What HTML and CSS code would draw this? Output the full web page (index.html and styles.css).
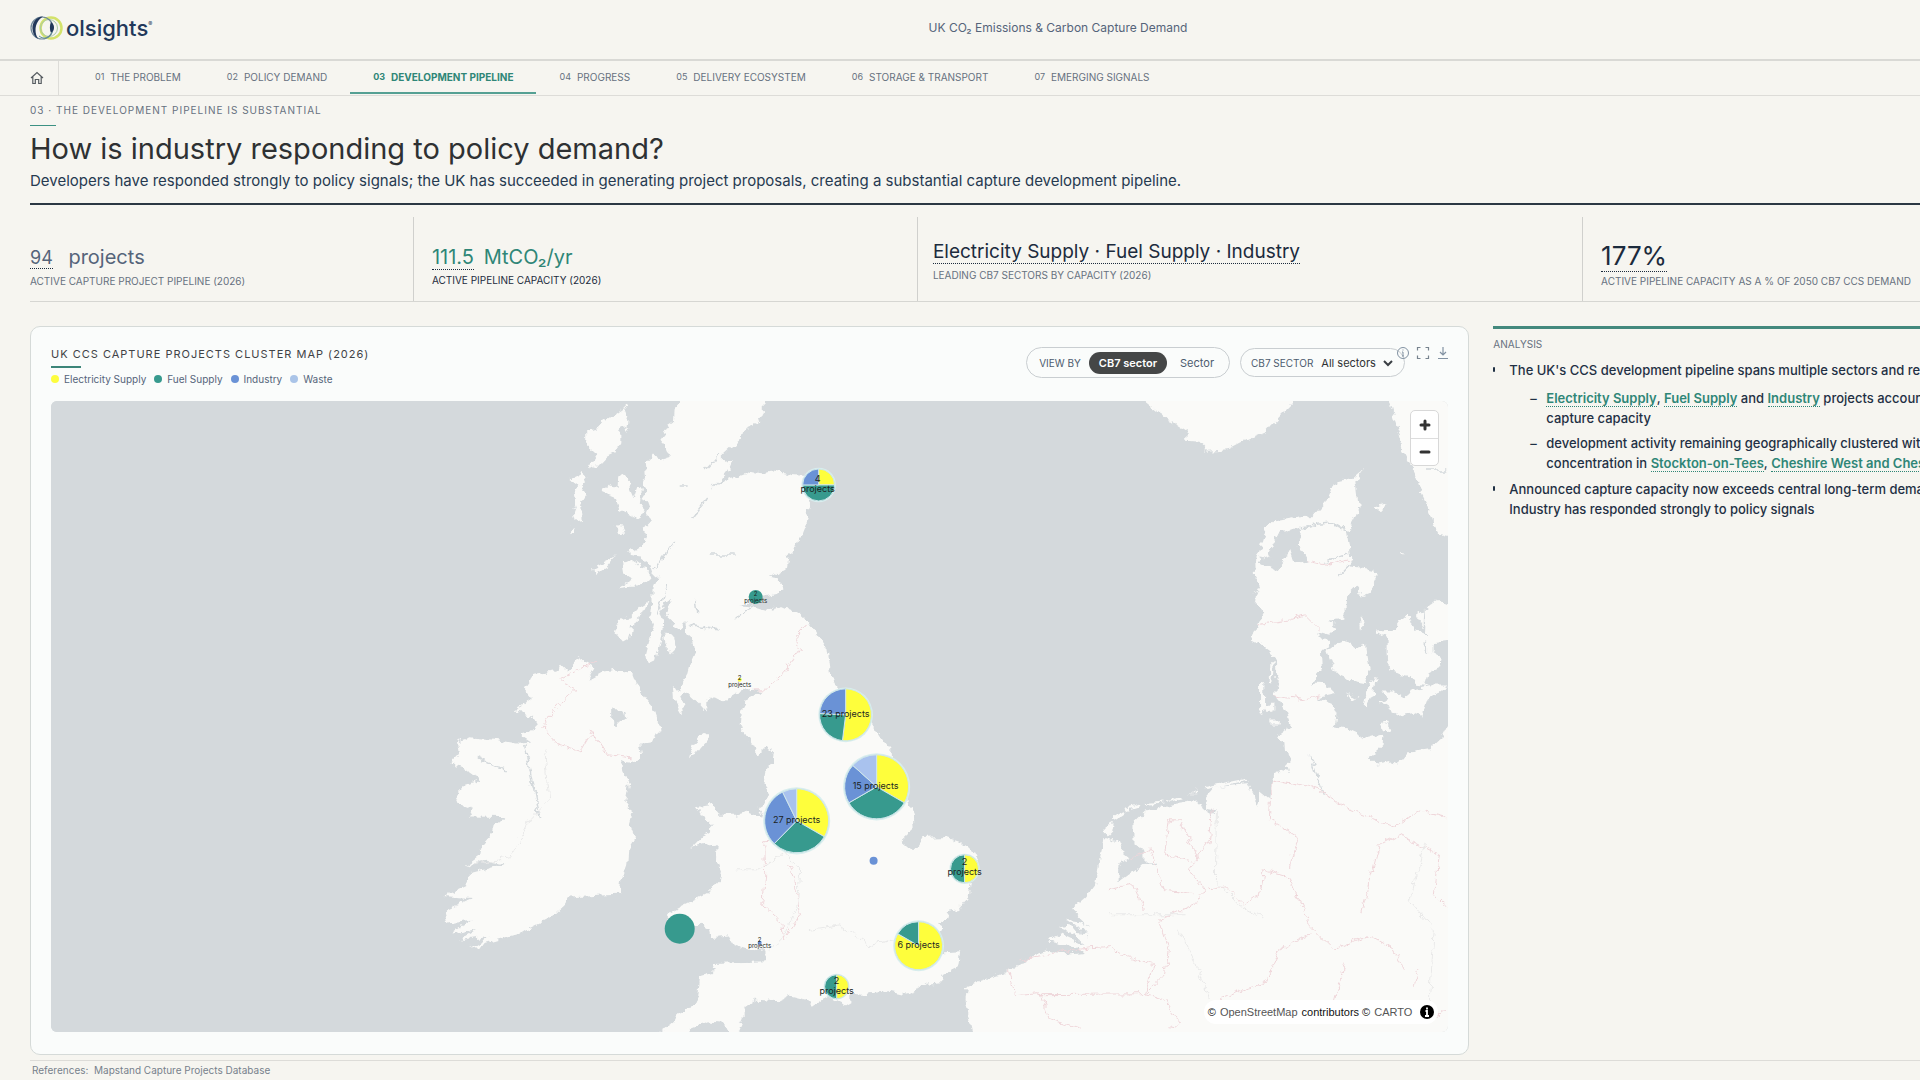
FILE: index.html
```
<!DOCTYPE html>
<html lang="en">
<head>
<meta charset="utf-8">
<title>UK CO₂ Emissions &amp; Carbon Capture Demand</title>
<link rel="stylesheet" href="styles.css">
</head>
<body>
<div class="page">
  <header class="topbar">
    <a class="logo" href="#" aria-label="Olsights">
      <svg width="34" height="28" viewBox="0 0 34 28" aria-hidden="true">
        <circle cx="21" cy="14" r="10.500" fill="none" stroke="#d3e26a" stroke-width="2.5"/>
        <circle cx="19" cy="14" r="8.5" fill="none" stroke="#a9c8a8" stroke-width="1"/>
        <circle cx="12" cy="14" r="11" fill="none" stroke="#6f8799" stroke-width="1.2"/>
        <path d="M13 2.500C1 3-1 19 8 25 3 16 6 7 13 2.500Z" fill="#22385a"/>
        <path d="M21 8c4 3 4 8 0 11-1.500-3-1.500-8 0-11Z" fill="#22385a"/>
        <path d="M9 22c5 4 11 2 13-4" fill="none" stroke="#5d8f91" stroke-width="1"/>
      </svg>
      <span>olsights<sup>®</sup></span>
    </a>
    <p class="topbar-title">UK CO₂ Emissions &amp; Carbon Capture Demand</p>
  </header>

  <nav class="tabs">
    <a class="home" href="#" aria-label="Home">
      <svg width="14" height="14" viewBox="0 0 14 14" fill="none" stroke="#555b60" stroke-width="1.2" aria-hidden="true"><path d="M1 7 7 1.5 13 7M2.800 5.800V12.500H5.300V8.500H8.700V12.500H11.200V5.800"/></svg>
    </a>
    <a class="tab" href="#"><span>01</span>THE PROBLEM</a>
    <a class="tab" href="#"><span>02</span>POLICY DEMAND</a>
    <a class="tab active" href="#"><span>03</span>DEVELOPMENT PIPELINE</a>
    <a class="tab" href="#"><span>04</span>PROGRESS</a>
    <a class="tab" href="#"><span>05</span>DELIVERY ECOSYSTEM</a>
    <a class="tab" href="#"><span>06</span>STORAGE &amp; TRANSPORT</a>
    <a class="tab" href="#"><span>07</span>EMERGING SIGNALS</a>
  </nav>

  <div class="content">
    <section class="intro">
      <p class="eyebrow">03 · THE DEVELOPMENT PIPELINE IS SUBSTANTIAL</p>
      <h1>How is industry responding to policy demand?</h1>
      <p class="lede">Developers have responded strongly to policy signals; the UK has succeeded in generating project proposals, creating a substantial capture development pipeline.</p>
    </section>

    <section class="kpis">
      <div class="kpi">
        <p class="value slate"><span class="count small">94</span> projects</p>
        <p class="label">ACTIVE CAPTURE PROJECT PIPELINE (2026)</p>
      </div>
      <div class="kpi">
        <p class="value teal"><span class="count">111.5</span> MtCO₂/yr</p>
        <p class="label dark">ACTIVE PIPELINE CAPACITY (2026)</p>
      </div>
      <div class="kpi sectors">
        <p class="value"><span class="dotted">Electricity Supply · Fuel Supply · Industry</span></p>
        <p class="label">LEADING CB7 SECTORS BY CAPACITY (2026)</p>
      </div>
      <div class="kpi">
        <p class="value"><span class="count large">177%</span></p>
        <p class="label">ACTIVE PIPELINE CAPACITY AS A % OF 2050 CB7 CCS DEMAND</p>
      </div>
    </section>

    <main class="main">
      <section class="card">
        <div class="card-head">
          <div>
            <h2>UK CCS CAPTURE PROJECTS CLUSTER MAP (2026)</h2>
            <ul class="legend">
              <li><i class="dot elec"></i>Electricity Supply</li>
              <li><i class="dot fuel"></i>Fuel Supply</li>
              <li><i class="dot ind"></i>Industry</li>
              <li><i class="dot waste"></i>Waste</li>
            </ul>
          </div>
          <div class="controls">
            <div class="pill">
              <span class="pill-label">VIEW BY</span>
              <button class="seg on" type="button">CB7 sector</button>
              <button class="seg" type="button">Sector</button>
            </div>
            <div class="pill pick">
              <label class="pill-label" for="sector">CB7 SECTOR</label>
              <select id="sector"><option>All sectors</option></select>
              <svg width="12" height="8" viewBox="0 0 12 8" fill="none" stroke="#3a3f44" stroke-width="2" aria-hidden="true"><path d="M2 2l4 4 4-4"/></svg>
            </div>
          </div>
          <div class="tools">
            <button type="button" aria-label="Information"><svg width="14" height="14" viewBox="0 0 14 14" fill="none" stroke="#8292a2"><circle cx="7" cy="7" r="5.500"/><path d="M7 3.500v1M6 6h1v4M6 10h2"/></svg></button>
            <button type="button" aria-label="Full screen"><svg width="14" height="14" viewBox="0 0 14 14" fill="none" stroke="#77838e" stroke-width="1.2"><path d="M1.500 4.500v-3h3M9.500 1.500h3v3M12.500 9.500v3h-3M4.500 12.500h-3v-3"/></svg></button>
            <button type="button" aria-label="Download"><svg width="14" height="14" viewBox="0 0 14 14" fill="none" stroke="#8292a2" stroke-width="1.200"><path d="M7 1v8M4 6l3 3 3-3M2 12.500h10"/></svg></button>
          </div>
        </div>

        <div class="map">
          <svg class="map-canvas" viewBox="51 401 1398 631" role="img" aria-label="Cluster map of UK capture projects">
            <defs>
              <filter id="coast" x="0" y="0" width="100%" height="100%">
                <feTurbulence type="fractalNoise" baseFrequency="0.12" numOctaves="3" seed="4" result="n"/>
                <feDisplacementMap in="SourceGraphic" in2="n" scale="9" xChannelSelector="R" yChannelSelector="G"/>
              </filter>
            </defs>
            <g filter="url(#coast)">
              <rect x="30" y="380" width="1440" height="670" fill="#d4d9dc"/>
              <g fill="#fafaf8">
                <!-- Scotland, the Hebrides and the north of Ireland -->
                <g transform="translate(400 390) scale(.3571 .3333)">
                  <path d="M780 0L780 33 770 60 768 95 740 115 745 135 730 155 745 175 762 200 735 208 710 198 700 212 686 215 688 235 690 262 682 285 692 310 680 330 702 345 692 372 702 395 683 420 690 440 678 468 640 482 642 495 670 500 702 525 710 550 722 560 708 595 708 640 702 680 712 700 697 760 688 800 695 822 715 812 728 760 738 700 730 670 745 640 760 630 745 680 765 700 785 720 800 690 802 730 822 750 828 785 810 830 800 870 780 905 765 885 768 930 790 970 795 950 785 920 810 915 835 940 855 965 865 920 900 930 930 920 955 905 990 900 1018 905 975 925 960 955 955 1010 1310 1010 1250 930 1225 895 1205 850 1195 770 1170 730 1140 690 1115 665 1080 657 1055 645 1040 667 1000 655 950 648 985 640 1010 622 1050 612 1075 595 1062 565 1030 560 1060 550 1085 530 1090 495 1110 475 1125 430 1140 390 1145 350 1165 290 1140 258 1100 255 1050 245 1010 250 985 245 950 258 920 265 895 280 868 300 900 265 918 240 930 210 905 215 905 190 925 170 950 150 975 110 1000 100 1020 70 1018 0Z"/>
                  <path d="M630 50L640 75 635 110 615 120 615 160 600 190 580 200 550 235 530 228 550 195 525 170 525 125 550 120 570 95 600 75Z"/>
                  <path d="M505 240L528 262 510 290 520 320 505 345 510 390 490 395 485 370 495 340 490 310 500 290 475 270 500 258Z"/>
                  <path d="M490 408L485 430 470 440 480 415ZM605 405L627 407 632 428 615 430ZM605 498L582 528 545 552 542 535 580 515ZM635 112l8 0-6 14Z"/>
                  <path d="M622 250L642 270 645 300 655 325 668 285 678 300 672 340 692 365 665 385 640 375 615 360 605 325 570 310 568 300 590 280 610 290 612 260Z"/>
                  <path d="M622 515L650 508 685 535 705 560 680 585 640 588 610 592 652 570 628 550Z"/>
                  <path d="M697 632L680 670 655 692 650 740 625 755 600 725 615 685 645 680 670 650ZM745 728L768 738 775 775 760 792 745 772 738 745Z"/>
                  <path d="M320 965L345 945 370 925 348 895 375 855 430 845 455 828 470 845 500 805 545 832 525 872 570 845 615 838 650 847 665 890 690 925 695 950 715 965 722 1000 690 1010 390 1010 370 975Z"/>
                </g>
                <!-- Ireland, Wales and England -->
                <g transform="translate(400 700) scale(.3954 .3333)">
                  <path d="M290 30L320 45 370 50 330 95 300 105 330 128 300 132 240 120 180 112 145 125 150 165 130 190 165 205 205 240 165 255 140 285 150 315 185 330 175 350 262 352 240 375 235 400 205 440 200 470 165 500 220 480 270 492 180 520 165 558 105 592 180 598 110 635 118 668 180 660 130 702 195 688 150 722 230 708 180 745 300 705 320 690 380 655 420 610 430 590 500 585 555 582 560 545 575 500 578 450 595 415 580 370 587 340 570 310 580 250 563 215 560 185 582 188 610 165 605 135 640 130 657 90 650 50 640 20 625 0 400 0Z"/>
                  <path d="M880 0L865 40 865 90 885 120 905 165 925 140 947 155 942 190 925 215 920 250 932 270 925 310 905 325 922 355 880 335 850 345 812 345 785 380 785 395 765 410 735 447 770 435 802 432 800 480 810 510 805 545 780 580 720 615 675 642 690 665 715 692 745 680 760 672 785 690 790 715 830 710 845 740 885 755 920 745 930 785 870 787 795 790 790 820 760 830 755 890 735 925 700 945 690 970 640 1010 720 1010 735 985 780 965 820 970 835 1010 855 1000 870 960 870 925 900 900 960 905 990 888 1030 900 1045 918 1080 890 1125 915 1140 905 1140 882 1165 885 1240 873 1285 885 1330 852 1370 848 1370 825 1412 800 1418 755 1380 758 1330 755 1375 748 1345 720 1370 690 1362 668 1392 655 1380 635 1415 628 1440 590 1445 540 1468 495 1455 465 1425 430 1380 412 1320 415 1305 445 1285 443 1268 425 1300 390 1298 340 1285 305 1282 250 1245 180 1245 155 1215 110 1180 45 1130 0Z"/>
                  <path d="M930 745L960 730 978 698 1000 675 1000 740 925 790Z"/>
                  <path d="M752 322L790 315 812 348 800 368 775 370ZM775 96L780 120 750 162 732 172 742 138 758 108ZM700 -10L712 25 720 42 712 0ZM742 -10L778 30 778 -10ZM800-20L818 12 845-20Z"/>
                </g>
                <!-- France, the Low Countries and Germany -->
                <g transform="translate(1000 700) scale(.3333)">
                  <path d="M-80 996L-102 900 -98 860 -60 845 0 825 40 805 110 762 140 750 190 765 250 757 235 742 145 722 185 705 252 737 228 705 175 685 205 675 265 710 250 690 205 660 240 665 270 685 240 655 215 630 260 590 290 550 300 480 315 415 355 425 365 450 390 470 360 490 357 545 430 493 465 492 480 485 450 488 432 470 432 447 405 437 405 370 440 335 500 320 595 305 607 330 640 350 648 335 617 330 620 290 645 260 740 250 757 285 775 318 785 275 810 295 815 240 830 212 865 218 915 220 940 200 1110 180 1150 210 1200 190 1230 155 1300 145 1350 100 1450 100 1450 1100 -80 1100Z"/>
                  <path d="M318 380L340 368 335 395 320 410ZM340 352L372 330 375 340 345 360ZM375 325L420 312 425 318 378 332ZM435 310L495 305 495 311 437 315ZM500 302L550 292 550 298 505 306ZM572 280L590 272 590 280ZM610 262L740 236 745 242 615 268ZM800 18h22v15h-22ZM790 -20h7v60h-7ZM810 62h28v12h-28Z"/>
                </g>
                <!-- Scandinavia and Jutland -->
                <g transform="translate(1100 390) scale(.3333)">
                  <path d="M100 0L135 33 200 85 262 125 260 152 300 155 325 182 385 178 420 160 455 145 500 125 540 80 600 20 600 0ZM860 0L882 80 900 130 915 190 945 250 965 310 985 350 1000 400 1020 435 1100 455 1100 0Z"/>
                  <path d="M575 1010L530 1043 555 1060 557 1090 575 1105 558 1140 570 1135 660 1400 1100 1400 1100 1000 1045 1010 1030 1040 990 1075 930 1085 900 1130 880 1118 830 1128 808 1105 850 1065 852 1035 810 1047 750 1020 705 1012 712 970 700 942 655 925 712 912 680 880 635 878 665 840 662 790 690 762 655 725 690 735 712 712 690 695 738 690 740 620 770 590 790 620 808 612 830 565 825 540 800 535 755 530 750 480 743 430 765 390 778 350 768 272 792 236 755 268 700 280 675 340 640 378 580 385 525 395 500 415 482 475 465 520 467 560 484 585 462 625 487 655 492 690 475 700 460 755 495 772 527 800 535 870 528 905 540 935 560 970Z"/>
                  <path d="M680 775L740 752 770 775 800 765 805 800 812 850 800 880 770 875 720 855 700 830ZM830 722L880 720 900 690 925 670 945 720 985 735 950 680 1010 632 1100 650 1100 745 1000 760 1000 790 1027 805 1022 832 985 850 975 880 995 890 950 885 935 860 870 845 865 790 865 745ZM843 905L880 905 920 925 935 900 985 890 1045 890 985 930 965 985 950 965 900 975 842 940 870 930ZM830 858L822 910 803 950 793 945 805 900ZM825 352L865 343 845 364ZM780 680L796 700 785 715ZM840 1005L860 995 882 1022 850 1025ZM905 490h14v6h-14ZM740 905L773 925 760 932ZM497 945h28v14h-28ZM485 880l10 0-2 95-8-20ZM510 820l10 0-4 60-8 0Z"/>
                </g>
              </g>
              <!-- Inland water -->
              <g fill="#d4d9dc" stroke="#d4d9dc" stroke-width="1">
                <path d="M1286 532L1301 527 1300 547 1308 560 1296 563 1291 548 1281 565 1281 572 1260 563 1262 556 1273 560 1270 552 1280 532ZM613 710l10 0 2 8-8 8-4-2Z"/>
                <path fill="none" stroke-width="1.500" d="M1302 527 1320 524 1334 523 1349 532M1324 563 1349 553M1340 575 1350 565M692 518 708 498M655 570 675 543M735 618 770 600M697 612 695 598M540 820 530 770 525 745M1310 755 1325 795M1427 640v15M1410 620 1425 630 1426 600M1447 470h-20M505 770l-25-12M620 665l10-30M706 470 720 455M680 485h10M710 555h25M690 625 720 630M668 585 658 615"/>
              </g>
              <!-- National and regional borders -->
              <g fill="none" stroke="#efd6da" stroke-width="1">
                <path d="M755 690 765 690 785 672 800 650 795 638 807 625M597 660 560 680 575 690 558 705 542 728 560 745 580 752 592 731 608 755 632 758M800 838 765 842 766 875 763 905 782 922 784 940M784 940 800 915 795 880 790 865"/>
                <path d="M1010 970 1015 995 1040 993 1050 1020 1080 1030M1040 995 1145 994 1155 965 1120 955 1110 947 1090 948 1045 955 1020 960M1147 994 1165 1000 1180 1022 1170 1030M1147 994 1165 975 1170 950 1160 920 1195 905 1205 890 1190 870 1210 840 1213 810M1195 862 1165 855 1170 820 1180 820 1200 860M1210 888 1225 885 1245 905 1260 895 1265 870 1290 878 1310 925 1320 935 1335 950 1370 935 1395 950 1405 970M1310 935 1280 950 1265 985 1245 990 1220 1000M1345 965 1335 1000M1362 915 1380 845 1400 835 1440 855 1435 895 1448 907M1395 827 1420 810 1447 817M1290 868 1298 837 1270 820 1272 780 1320 790 1350 810 1395 827M1258 625 1290 620 1305 615 1320 630M1276 695 1305 700 1320 697M1308 560 1330 565 1350 560M1130 860 1150 850 1165 890 1195 895M1110 890 1135 885 1145 910M1420 970 1415 985M1435 1020 1447 1010"/>
              </g>
              <g fill="none" stroke="#e9e9e9" stroke-width="1">
                <path d="M545 750 550 800 530 820 510 857 470 865M735 870 760 870 784 852 800 870 798 905 785 935 770 950M810 930 840 925 870 945 895 940M1217 810 1216 880 1240 905 1265 918M1180 930 1195 960 1210 1000M1425 845 1410 900 1435 930 1430 1000M1110 915 1145 915 1185 915"/>
              </g>
            </g>

            <!-- Cluster markers -->
            <g class="pies">
              <circle class="fuel" cx="680" cy="929" r="15"/>
              <circle class="ind" cx="874" cy="861" r="4"/>
              <circle class="fuel" cx="756" cy="597" r="7"/>
              <circle class="elec" cx="740" cy="680" r="2"/>
              <circle class="ind" cx="760" cy="943" r="2"/>
              <g transform="translate(819 485) scale(16)"><circle class="halo" r="1.080"/><path class="elec" d="M0 0V-1A1 1 0 0 1 1 0Z"/><path class="fuel" d="M0 0H1A1 1 0 0 1 -1 0Z"/><path class="ind" d="M0 0H-1A1 1 0 0 1 0 -1Z"/></g>
              <g transform="translate(846 715) scale(26)"><circle class="halo" r="1.050"/><path class="elec" d="M0 0V-1A1 1 0 1 1 -.122 .993Z"/><path class="fuel" d="M0 0L-.122 .993A1 1 0 0 1 -1 -.050Z"/><path class="ind" d="M0 0L-1 -.050A1 1 0 0 1 0 -1Z"/></g>
              <g transform="translate(877 787) scale(32)"><circle class="halo" r="1.050"/><path class="elec" d="M0 0V-1A1 1 0 0 1 .866 .500Z"/><path class="fuel" d="M0 0L.866 .500A1 1 0 0 1 -.866 .500Z"/><path class="ind" d="M0 0L-.866 .500A1 1 0 0 1 -.743 -.669Z"/><path class="waste" d="M0 0L-.743 -.669A1 1 0 0 1 0 -1Z"/></g>
              <g transform="translate(797 821) scale(32)"><circle class="halo" r="1.050"/><path class="elec" d="M0 0V-1A1 1 0 0 1 .866 .500Z"/><path class="fuel" d="M0 0L.866 .500A1 1 0 0 1 -.700 .714Z"/><path class="ind" d="M0 0L-.700 .714A1 1 0 0 1 -.438 -.899Z"/><path class="waste" d="M0 0L-.438 -.899A1 1 0 0 1 0 -1Z"/></g>
              <g transform="translate(965 869) scale(14)"><circle class="halo" r="1.080"/><path class="elec" d="M0 0V-1A1 1 0 0 1 0 1Z"/><path class="fuel" d="M0 0V1A1 1 0 0 1 0 -1Z"/></g>
              <g transform="translate(919 946) scale(24)"><circle class="halo" r="1.060"/><path class="elec" d="M0 0V-1A1 1 0 1 1 -.866 -.500Z"/><path class="fuel" d="M0 0L-.866 -.500A1 1 0 0 1 0 -1Z"/></g>
              <g transform="translate(837 987) scale(12)"><circle class="halo" r="1.080"/><path class="elec" d="M0 0V-1A1 1 0 0 1 0 1Z"/><path class="fuel" d="M0 0V1A1 1 0 0 1 0 -1Z"/></g>
            </g>
            <g class="names">
              <text x="818" y="482">4</text><text x="818" y="492">projects</text>
              <text x="846" y="717">23 projects</text>
              <text x="876" y="789">15 projects</text>
              <text x="797" y="823">27 projects</text>
              <text x="965" y="865">2</text><text x="965" y="875">projects</text>
              <text x="919" y="948">6 projects</text>
              <text x="837" y="984">2</text><text x="837" y="994">projects</text>
              <g class="tiny">
                <text x="756" y="596">2</text><text x="756" y="603">projects</text>
                <text x="740" y="680">2</text><text x="740" y="687">projects</text>
                <text x="760" y="942">2</text><text x="760" y="948">projects</text>
              </g>
            </g>
          </svg>
          <div class="zoom">
            <button type="button" aria-label="Zoom in"><svg width="12" height="12" viewBox="0 0 12 12" stroke="#333" stroke-width="3" stroke-linecap="round"><path d="M6 2v8M2 6h8"/></svg></button>
            <button type="button" aria-label="Zoom out"><svg width="12" height="12" viewBox="0 0 12 12" stroke="#333" stroke-width="3" stroke-linecap="round"><path d="M2 6h8"/></svg></button>
          </div>
          <p class="credit">© <a href="#">OpenStreetMap</a> contributors © <a href="#">CARTO</a>
            <svg width="14" height="14" viewBox="0 0 14 14" aria-hidden="true"><circle cx="7" cy="7" r="7"/><path d="M7 2.500v2M5.500 6H7v5M5 11h4" stroke="#fff" stroke-width="1.800" fill="none"/></svg>
          </p>
        </div>
      </section>

      <aside class="analysis">
        <h2>ANALYSIS</h2>
        <ul class="points">
          <li>The UK's CCS development pipeline spans multiple sectors and regions
            <ul>
              <li><a href="#">Electricity Supply</a>, <a href="#">Fuel Supply</a> and <a href="#">Industry</a> projects account for most<br>capture capacity</li>
              <li>development activity remaining geographically clustered with<br>concentration in <a href="#">Stockton-on-Tees</a>, <a href="#">Cheshire West and Chester</a></li>
            </ul>
          </li>
          <li>Announced capture capacity now exceeds central long-term demand<br>Industry has responded strongly to policy signals</li>
        </ul>
      </aside>
    </main>

    <footer class="refs">References:&nbsp; Mapstand Capture Projects Database</footer>
  </div>
</div>
</body>
</html>
```
FILE: styles.css
```
* { box-sizing: border-box; }

body {
  margin: 0;
  overflow-x: hidden;
  background: #f6f5f0;
  color: #1f3044;
  font-family: Inter, "Open Sans", sans-serif;
}

h1, h2, p, ul { margin: 0; padding: 0; }
ul { list-style: none; }
a { color: inherit; text-decoration: none; }
button { padding: 0; border: 0; background: none; color: inherit; font: inherit; cursor: pointer; }
svg { display: block; }

.page { width: calc(100% + 196px); }

/* Header */
.topbar {
  display: grid;
  grid-template-columns: 1fr auto 1fr;
  align-items: center;
  height: 61px;
  padding: 0 30px 4px;
  border-bottom: 2px solid #d9d9d5;
}
.logo {
  display: flex;
  align-items: center;
  gap: 2px;
  color: #22385a;
  font-size: 22px;
  font-weight: 500;
}
.logo sup { font-size: 6px; font-weight: 400; vertical-align: 10px; }
.topbar-title { color: #55647a; font-size: 12px; }

/* Tabs */
.tabs {
  display: flex;
  height: 35px;
  border-bottom: 1px solid #dddcd8;
  color: #66717f;
  font-size: 10px;
}
.home {
  display: flex;
  align-items: center;
  width: 59px;
  margin-right: 13px;
  padding-left: 30px;
  border-right: 1px solid #dddcd8;
}
.tab {
  display: flex;
  align-items: center;
  gap: 6px;
  height: 33px;
  padding: 0 23px;
  border-bottom: 2px solid transparent;
}
.tab span { font-size: 9px; }
.tab.active { border-color: #55a093; color: #2f8677; font-weight: 700; }

.content { padding: 0 30px; }

/* Intro */
.intro { padding: 7px 0 13px; border-bottom: 2px solid #2b3844; }
.eyebrow { color: #66717f; font-size: 10px; line-height: 15px; letter-spacing: 1px; }
.eyebrow::after {
  content: "";
  display: block;
  width: 26px;
  height: 1px;
  margin-top: 7px;
  background: #3c9183;
}
h1 { margin-top: 4px; color: #2e3133; font-size: 29px; font-weight: 400; line-height: 38px; }
.lede { margin-top: 4px; color: #263a50; font-size: 15px; line-height: 18px; }

/* Key figures */
.kpis {
  display: grid;
  grid-template-columns: 19fr 25fr 33fr 25fr;
  margin-top: 12px;
  border-bottom: 1px solid #d6d6d2;
}
.kpi {
  display: flex;
  flex-direction: column;
  justify-content: center;
  height: 84px;
  padding-left: 18px;
  border-left: 1px solid #d0d0cd;
}
.kpi:first-child { padding-left: 0; border-left: 0; }
.kpi.sectors { padding-left: 15px; }
.value { padding-top: 10px; color: #1c2b3d; font-size: 20px; line-height: 32px; white-space: nowrap; }
.sectors .value { padding-top: 0; font-size: 19px; }
.value.slate { color: #55647a; }
.value.teal { color: #2f8677; }
.count, .dotted { border-bottom: 1px dotted #1c2b3d; }
.count { margin-right: 4px; font-size: 20px; }
.count.small { font-size: 18px; margin-right: 10px; }
.count.large { font-size: 26px; }
.label { color: #66717f; font-size: 10px; line-height: 14px; }
.label.dark { color: #1c2b3d; }

/* Main area */
.main {
  display: grid;
  grid-template-columns: minmax(0, 17fr) minmax(0, 7fr);
  gap: 24px;
  margin-top: 24px;
}
.card {
  padding: 20px 20px 22px;
  border: 1px solid #d5dad8;
  border-radius: 10px;
  background: #fafcfb;
}
.card-head { position: relative; display: flex; justify-content: space-between; align-items: flex-start; }
.card h2 { color: #3f4346; font-size: 11px; font-weight: 400; line-height: 14px; letter-spacing: 1px; }
.card h2::after {
  content: "";
  display: block;
  width: 30px;
  height: 2px;
  margin: 5px 0 4px;
  background: #3c8578;
}
.legend { display: flex; gap: 8px; color: #55647a; font-size: 10px; line-height: 14px; }
.legend li { display: flex; align-items: center; gap: 5px; }
.dot { width: 8px; height: 8px; border-radius: 50%; }
.dot.elec { background: #fdfd3e; }
.dot.fuel { background: #379a8e; }
.dot.ind { background: #6a92d6; }
.dot.waste { background: #aac4e8; }

.controls { display: flex; align-items: center; gap: 10px; margin-right: 43px; }
.pill {
  display: flex;
  align-items: center;
  height: 31px;
  padding: 0 12px;
  border: 1px solid #c9ced1;
  border-radius: 16px;
  color: #4c5b6e;
  font-size: 11px;
}
.pill-label { font-size: 10px; }
.seg { height: 22px; margin-left: 8px; padding: 0 3px; border-radius: 11px; }
.seg.on { padding: 0 10px; background: #454747; color: #fff; font-weight: 600; }
.seg + .seg { margin-left: 10px; }
.pick { height: 29px; padding: 0 10px; }
.pick select {
  appearance: none;
  margin: 0 6px 0 8px;
  padding: 0;
  border: 0;
  background: none;
  color: #2e3133;
  font: 11px Inter, sans-serif;
}
.tools { position: absolute; top: -1px; right: -2px; display: flex; gap: 6px; }

/* Map */
.map { position: relative; margin-top: 15px; border-radius: 6px; overflow: hidden; background: #d4d9dc; }
.map-canvas { width: 100%; height: auto; }
.pies .elec { fill: #fefe3c; }
.pies .fuel { fill: #379a8e; }
.pies .ind { fill: #6a92d6; }
.pies .waste { fill: #a9c2ee; }
.pies .halo { fill: #d8eeee; }
.pies path { stroke: #cfe6ea; stroke-width: 1px; vector-effect: non-scaling-stroke; }
.names { fill: #1b1f22; font-size: 9px; text-anchor: middle; }
.names .tiny { font-size: 6px; }

.zoom {
  position: absolute;
  top: 9px;
  right: 9px;
  width: 29px;
  border: 1px solid #d8d8d8;
  border-radius: 5px;
  background: #fff;
}
.zoom button { display: grid; place-items: center; width: 100%; height: 27px; }
.zoom button + button { border-top: 1px solid #ddd; }
.credit {
  position: absolute;
  right: 10px;
  bottom: 8px;
  display: flex;
  align-items: center;
  gap: 4px;
  height: 24px;
  padding: 0 4px;
  border-radius: 12px;
  background: #fff;
  color: #111;
  font: 11px "Liberation Sans", sans-serif;
}
.credit a { color: #555; }
.credit svg { margin-left: 4px; }

/* Analysis */
.analysis { border-top: 3px solid #43897d; font-size: 13px; font-weight: 500; line-height: 20px; white-space: nowrap; }
.analysis h2 {
  margin: 8px 0 9px;
  color: #66717f;
  font-size: 10px;
  font-weight: 400;
  line-height: 14px;
}
.points > li { position: relative; padding-left: 16px; }
.points > li + li { margin-top: 6px; }
.points > li::before {
  content: "";
  position: absolute;
  top: 7px;
  left: 0;
  width: 2px;
  height: 5px;
  border-radius: 1px;
  background: #1f3044;
}
.points ul { padding: 8px 0 0 37px; }
.points ul li { position: relative; }
.points ul li + li { margin-top: 5px; }
.points ul li::before { content: "–"; position: absolute; left: -16px; }
.points a { border-bottom: 1px dotted #2f8677; color: #2f8677; font-weight: 600; }

.refs {
  margin-top: 5px;
  padding: 2px 2px 0;
  border-top: 1px solid #dddcd8;
  color: #77818c;
  font-size: 10px;
  line-height: 14px;
}
```
